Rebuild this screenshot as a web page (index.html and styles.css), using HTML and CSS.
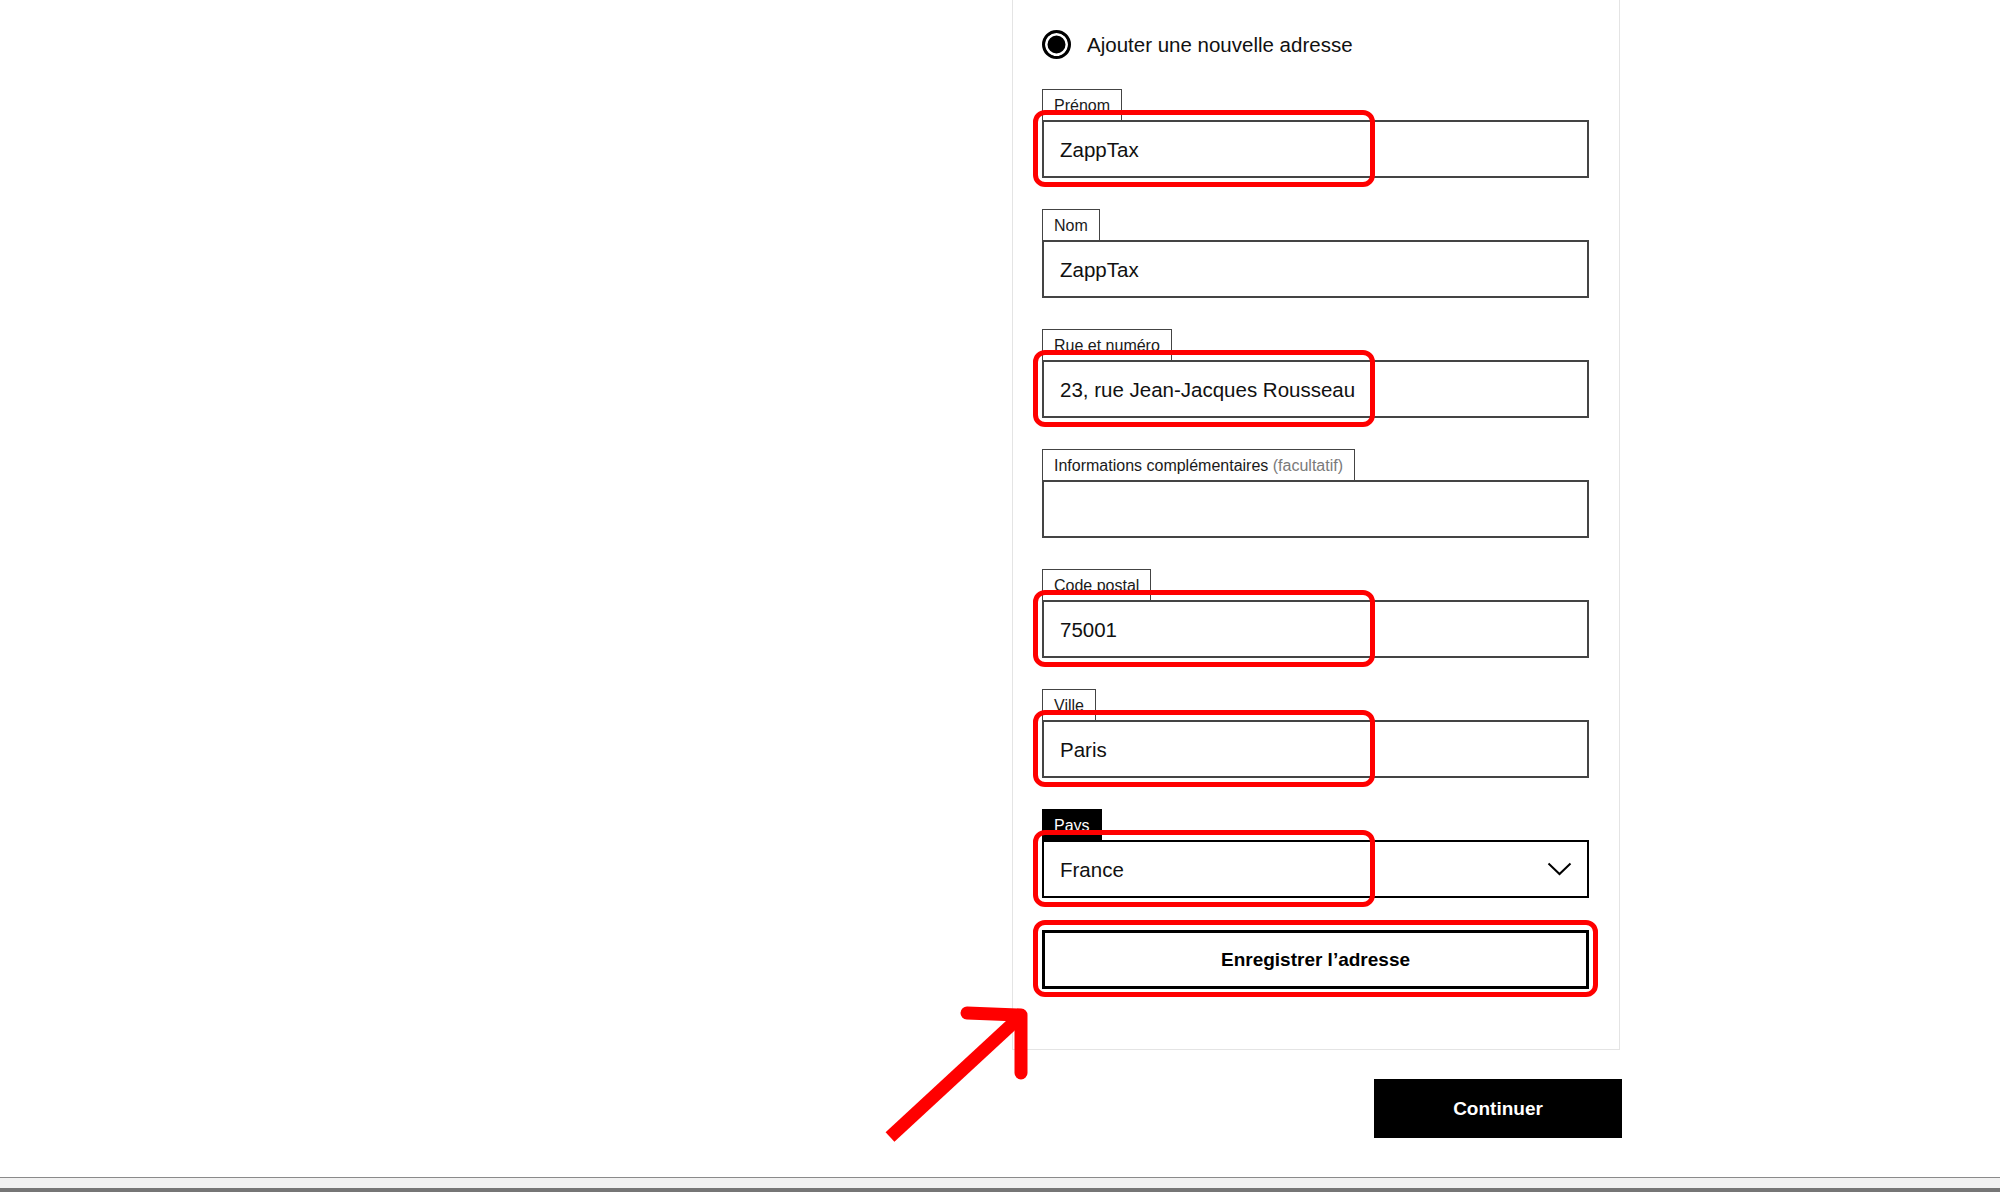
FILE: index.html
```html
<!DOCTYPE html>
<html lang="fr">
<head>
<meta charset="utf-8">
<title>Adresse</title>
<link rel="stylesheet" href="styles.css">
</head>
<body>
<div class="page">
  <main class="column">
    <section class="card">
      <div class="radio-row">
        <span class="radio"></span>
        <span class="radio-label">Ajouter une nouvelle adresse</span>
      </div>

      <div class="field">
        <span class="tab">Prénom</span>
        <div class="input">ZappTax</div>
        <span class="mark"></span>
      </div>

      <div class="field">
        <span class="tab">Nom</span>
        <div class="input">ZappTax</div>
      </div>

      <div class="field">
        <span class="tab">Rue et numéro</span>
        <div class="input">23, rue Jean-Jacques Rousseau</div>
        <span class="mark"></span>
      </div>

      <div class="field">
        <span class="tab">Informations complémentaires <span class="muted">(facultatif)</span></span>
        <div class="input"></div>
      </div>

      <div class="field">
        <span class="tab">Code postal</span>
        <div class="input">75001</div>
        <span class="mark"></span>
      </div>

      <div class="field">
        <span class="tab">Ville</span>
        <div class="input">Paris</div>
        <span class="mark"></span>
      </div>

      <div class="field">
        <span class="tab tab-dark">Pays</span>
        <div class="select">
          <span>France</span>
          <svg class="chevron" width="25" height="14" viewBox="0 0 25 14"><polyline points="1.5,1.5 12.5,12 23.5,1.5" fill="none" stroke="#000" stroke-width="2"/></svg>
        </div>
        <span class="mark"></span>
      </div>

      <div class="save-wrap">
        <button class="save" type="button">Enregistrer l’adresse</button>
        <span class="mark mark-btn"></span>
      </div>
    </section>

    <button class="continue" type="button">Continuer</button>
  </main>

  <svg class="arrow" width="170" height="160" viewBox="0 0 170 160">
    <path d="M20 147 L152 25" fill="none" stroke="#f00" stroke-width="13" stroke-linecap="butt"/>
    <path d="M97 23 L151 25 L151 83" fill="none" stroke="#f00" stroke-width="13" stroke-linecap="round" stroke-linejoin="round"/>
  </svg>
</div>
<footer class="bar"></footer>
</body>
</html>
```

FILE: styles.css
```css
* {
  box-sizing: border-box;
}

html, body {
  margin: 0;
  padding: 0;
  background: #fff;
}

body {
  font-family: "Liberation Sans", Arial, sans-serif;
  color: #111;
  width: 2000px;
  height: 1192px;
  overflow: hidden;
}

.page {
  position: relative;
  height: 1177px;
  display: flex;
}

.column {
  margin-left: 1012px;
  width: 610px;
  display: flex;
  flex-direction: column;
}

.card {
  width: 608px;
  border: 1px solid #e4e4e4;
  border-top: none;
  padding: 30px 30px 60px 29px;
  display: flex;
  flex-direction: column;
}

.radio-row {
  display: flex;
  align-items: center;
  height: 29px;
}

.radio {
  width: 29px;
  height: 29px;
  border-radius: 50%;
  border: 3px solid #000;
  background: #000;
  box-shadow: inset 0 0 0 2.5px #fff;
  flex: none;
}

.radio-label {
  margin-left: 16px;
  font-size: 20.5px;
  color: #111;
}

.field {
  position: relative;
  margin-top: 31px;
  display: flex;
  flex-direction: column;
  align-items: flex-start;
}

.radio-row + .field {
  margin-top: 30px;
}

.tab {
  height: 31px;
  border: 1px solid #444;
  border-bottom: none;
  padding: 6px 11px 0 11px;
  font-size: 16px;
  line-height: 19px;
  color: #1a1a1a;
  background: #fff;
  white-space: nowrap;
}

.tab-dark {
  background: #000;
  border-color: #000;
  color: #fff;
}

.muted {
  color: #7a7a7a;
}

.input {
  align-self: stretch;
  height: 58px;
  border: 2px solid #444;
  padding: 2px 16px 0;
  display: flex;
  align-items: center;
  font-size: 20.5px;
  color: #111;
}

.select {
  align-self: stretch;
  height: 58px;
  border: 2px solid #000;
  padding: 2px 15px 0 16px;
  display: flex;
  align-items: center;
  justify-content: space-between;
  font-size: 20.5px;
  color: #111;
}

.chevron {
  display: block;
  margin-top: -2px;
}

.mark {
  position: absolute;
  left: -9px;
  top: 21px;
  width: 342px;
  height: 77px;
  border: 5px solid #f00;
  border-radius: 12px;
  pointer-events: none;
}

.save-wrap {
  position: relative;
  margin-top: 32px;
}

.save {
  display: block;
  width: 100%;
  height: 59px;
  border: 3px solid #000;
  background: #fff;
  font-family: "Liberation Sans", Arial, sans-serif;
  font-size: 19px;
  font-weight: bold;
  color: #000;
  padding: 0;
}

.mark-btn {
  top: -10px;
  left: -9px;
  width: 565px;
  height: 77px;
}

.continue {
  align-self: flex-end;
  margin-top: 29px;
  width: 248px;
  height: 59px;
  border: none;
  background: #000;
  color: #fff;
  font-family: "Liberation Sans", Arial, sans-serif;
  font-size: 19px;
  font-weight: bold;
  padding: 0;
}

.arrow {
  position: absolute;
  left: 870px;
  top: 990px;
}

.bar {
  height: 15px;
  border-top: 1px solid #8a8a8a;
  background: #f1f1f1;
  border-bottom: 4px solid #767676;
}
```
